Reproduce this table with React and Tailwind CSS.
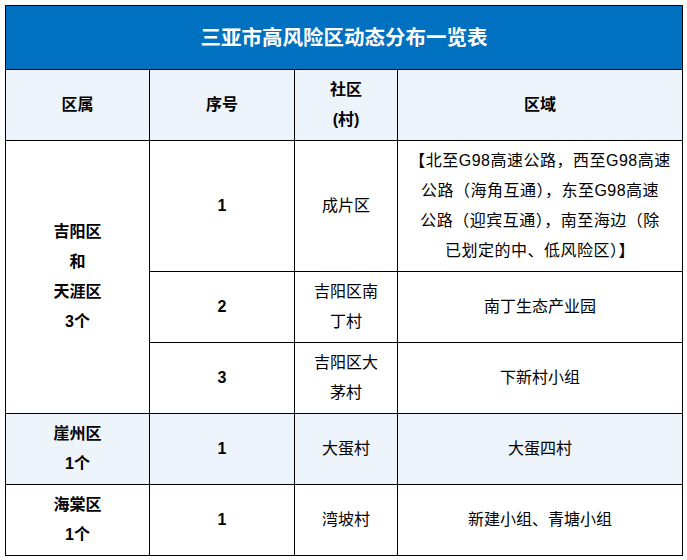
export default function App() {
  const font = { fontFamily: '"Liberation Sans", "Noto Sans CJK SC", sans-serif' };
  const td = "border border-black text-center align-middle p-0 text-[16px] leading-[30px] text-black";
  return (
    <div className="w-[687px] h-[560px] bg-white pt-[5px] pl-[5px]" style={font}>
      <table className="border-collapse table-fixed w-[677px]">
        <colgroup>
          <col className="w-[144px]" />
          <col className="w-[145px]" />
          <col className="w-[103px]" />
          <col className="w-[285px]" />
        </colgroup>
        <tbody>
          <tr className="h-[64px]">
            <td colSpan={4} className="border border-black bg-[#0070c0] text-white text-center font-bold text-[20.5px] leading-[30px]">
              三亚市高风险区动态分布一览表
            </td>
          </tr>
          <tr className="h-[71px] bg-[#eef4fb]">
            <td className={td + " font-bold"}>区属</td>
            <td className={td + " font-bold"}>序号</td>
            <td className={td + " font-bold"}>社区<br />(村)</td>
            <td className={td + " font-bold"}>区域</td>
          </tr>
          <tr className="h-[131px]">
            <td rowSpan={3} className={td + " font-bold"}>吉阳区<br />和<br />天涯区<br />3个</td>
            <td className={td + " font-bold"}>1</td>
            <td className={td}>成片区</td>
            <td className={td + " px-[4px] whitespace-nowrap tracking-[0.5px]"}>
              【北至G98高速公路，西至G98高速<br />
              公路（海角互通），东至G98高速<br />
              公路（迎宾互通），南至海边（除<br />
              已划定的中、低风险区）】
            </td>
          </tr>
          <tr className="h-[71px]">
            <td className={td + " font-bold"}>2</td>
            <td className={td + " px-[14px]"}>吉阳区南丁村</td>
            <td className={td}>南丁生态产业园</td>
          </tr>
          <tr className="h-[71px]">
            <td className={td + " font-bold"}>3</td>
            <td className={td + " px-[14px]"}>吉阳区大茅村</td>
            <td className={td}>下新村小组</td>
          </tr>
          <tr className="h-[71px] bg-[#eef4fb]">
            <td className={td + " font-bold"}>崖州区<br />1个</td>
            <td className={td + " font-bold"}>1</td>
            <td className={td}>大蛋村</td>
            <td className={td}>大蛋四村</td>
          </tr>
          <tr className="h-[71px]">
            <td className={td + " font-bold"}>海棠区<br />1个</td>
            <td className={td + " font-bold"}>1</td>
            <td className={td}>湾坡村</td>
            <td className={td}>新建小组、青塘小组</td>
          </tr>
        </tbody>
      </table>
    </div>
  );
}
